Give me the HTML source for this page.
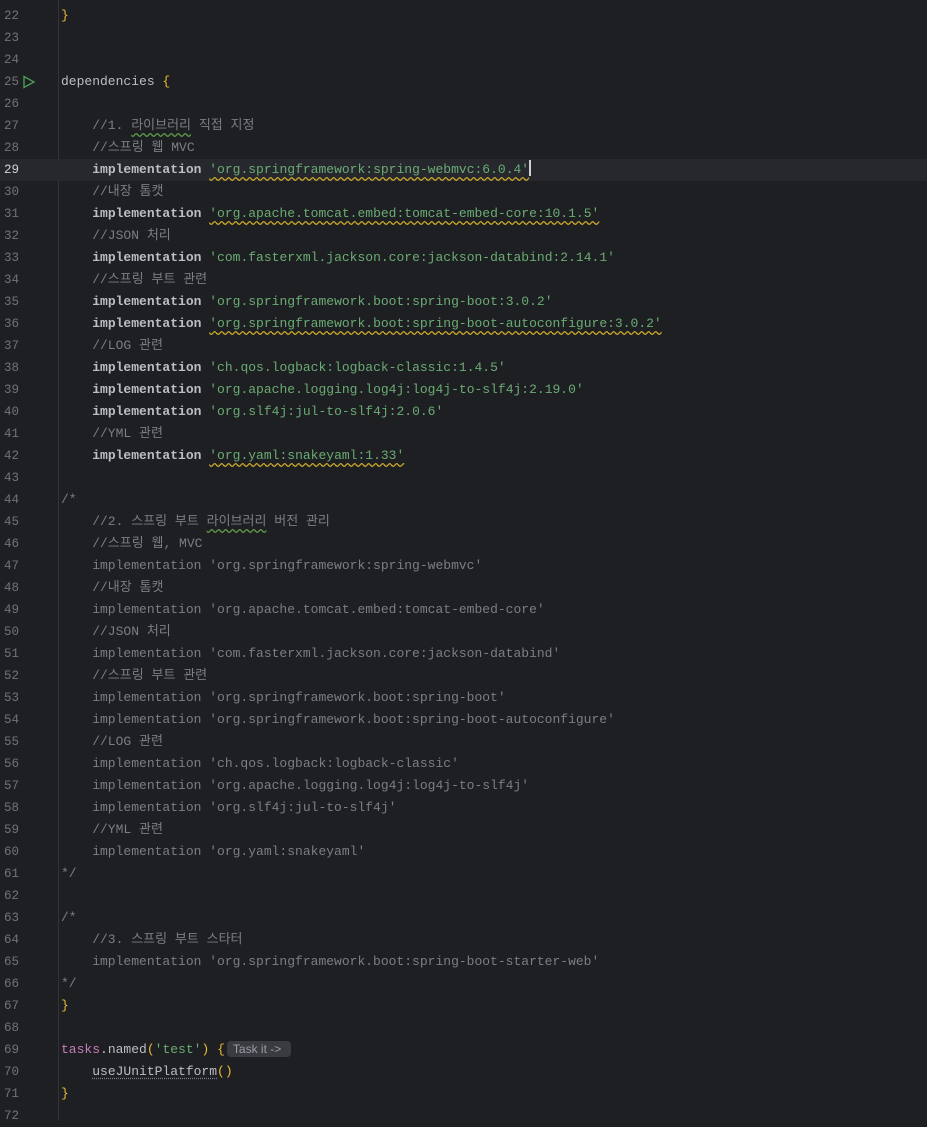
<!DOCTYPE html>
<html><head><meta charset="utf-8"><style>
body{margin:0;background:#1e1f22;width:927px;height:1121px;overflow:hidden;font-family:"Liberation Mono","Noto Sans CJK KR",monospace;font-size:13px;}
.l{position:absolute;left:0;width:927px;height:22px;line-height:22px;white-space:pre;color:#bcbec4}
.n{position:absolute;left:4px;width:30px;color:#6f737a;font-size:12.5px}
.c{position:absolute;left:61px}
.cur{background:#26282e}
.cur .n{color:#d0d2d6}
.g{position:absolute;left:58px;top:0;width:1px;height:1121px;background:#313338}
.cm{color:#7a7e85}.s{color:#6aab73}.b{color:#e8ba36}.k{font-weight:bold}.p{color:#c77dbb}
.wg{text-decoration:underline wavy #5f9a4a;text-underline-offset:3px}
.wy{text-decoration:underline wavy #c8a62a;text-underline-offset:3px}
.hint{display:inline-block;background:#393b40;color:#9a9da3;font-family:"Liberation Sans",sans-serif;font-size:12px;line-height:16px;padding:0 10px 0 6px;border-radius:4px;margin-left:2px}
.caret{display:inline-block;width:1.5px;height:16px;background:#ced0d6;vertical-align:-3px}
</style></head><body>
<div class="g"></div>
<div class="l" style="top:5px"><span class="n">22</span><span class="c b">}</span></div>
<div class="l" style="top:27px"><span class="n">23</span></div>
<div class="l" style="top:49px"><span class="n">24</span></div>
<div class="l" style="top:71px"><span class="n">25</span><svg style="position:absolute;left:22px;top:4px" width="14" height="14"><path d="M2 1.5 L12 7 L2 12.5Z" fill="none" stroke="#499c54" stroke-width="1.4"/></svg><span class="c">dependencies <span class="b">{</span></span></div>
<div class="l" style="top:93px"><span class="n">26</span></div>
<div class="l" style="top:115px"><span class="n">27</span><span class="c cm">    //1. <span class="wg">라이브러리</span> 직접 지정</span></div>
<div class="l" style="top:137px"><span class="n">28</span><span class="c cm">    //스프링 웹 MVC</span></div>
<div class="l cur" style="top:159px"><span class="n">29</span><span class="c">    <span class="k">implementation</span> <span class="s wy">'org.springframework:spring-webmvc:6.0.4'</span><span class="caret"></span></span></div>
<div class="l" style="top:181px"><span class="n">30</span><span class="c cm">    //내장 톰캣</span></div>
<div class="l" style="top:203px"><span class="n">31</span><span class="c">    <span class="k">implementation</span> <span class="s wy">'org.apache.tomcat.embed:tomcat-embed-core:10.1.5'</span></span></div>
<div class="l" style="top:225px"><span class="n">32</span><span class="c cm">    //JSON 처리</span></div>
<div class="l" style="top:247px"><span class="n">33</span><span class="c">    <span class="k">implementation</span> <span class="s">'com.fasterxml.jackson.core:jackson-databind:2.14.1'</span></span></div>
<div class="l" style="top:269px"><span class="n">34</span><span class="c cm">    //스프링 부트 관련</span></div>
<div class="l" style="top:291px"><span class="n">35</span><span class="c">    <span class="k">implementation</span> <span class="s">'org.springframework.boot:spring-boot:3.0.2'</span></span></div>
<div class="l" style="top:313px"><span class="n">36</span><span class="c">    <span class="k">implementation</span> <span class="s wy">'org.springframework.boot:spring-boot-autoconfigure:3.0.2'</span></span></div>
<div class="l" style="top:335px"><span class="n">37</span><span class="c cm">    //LOG 관련</span></div>
<div class="l" style="top:357px"><span class="n">38</span><span class="c">    <span class="k">implementation</span> <span class="s">'ch.qos.logback:logback-classic:1.4.5'</span></span></div>
<div class="l" style="top:379px"><span class="n">39</span><span class="c">    <span class="k">implementation</span> <span class="s">'org.apache.logging.log4j:log4j-to-slf4j:2.19.0'</span></span></div>
<div class="l" style="top:401px"><span class="n">40</span><span class="c">    <span class="k">implementation</span> <span class="s">'org.slf4j:jul-to-slf4j:2.0.6'</span></span></div>
<div class="l" style="top:423px"><span class="n">41</span><span class="c cm">    //YML 관련</span></div>
<div class="l" style="top:445px"><span class="n">42</span><span class="c">    <span class="k">implementation</span> <span class="s wy">'org.yaml:snakeyaml:1.33'</span></span></div>
<div class="l" style="top:467px"><span class="n">43</span></div>
<div class="l" style="top:489px"><span class="n">44</span><span class="c cm">/*</span></div>
<div class="l" style="top:511px"><span class="n">45</span><span class="c cm">    //2. 스프링 부트 <span class="wg">라이브러리</span> 버전 관리</span></div>
<div class="l" style="top:533px"><span class="n">46</span><span class="c cm">    //스프링 웹, MVC</span></div>
<div class="l" style="top:555px"><span class="n">47</span><span class="c cm">    implementation 'org.springframework:spring-webmvc'</span></div>
<div class="l" style="top:577px"><span class="n">48</span><span class="c cm">    //내장 톰캣</span></div>
<div class="l" style="top:599px"><span class="n">49</span><span class="c cm">    implementation 'org.apache.tomcat.embed:tomcat-embed-core'</span></div>
<div class="l" style="top:621px"><span class="n">50</span><span class="c cm">    //JSON 처리</span></div>
<div class="l" style="top:643px"><span class="n">51</span><span class="c cm">    implementation 'com.fasterxml.jackson.core:jackson-databind'</span></div>
<div class="l" style="top:665px"><span class="n">52</span><span class="c cm">    //스프링 부트 관련</span></div>
<div class="l" style="top:687px"><span class="n">53</span><span class="c cm">    implementation 'org.springframework.boot:spring-boot'</span></div>
<div class="l" style="top:709px"><span class="n">54</span><span class="c cm">    implementation 'org.springframework.boot:spring-boot-autoconfigure'</span></div>
<div class="l" style="top:731px"><span class="n">55</span><span class="c cm">    //LOG 관련</span></div>
<div class="l" style="top:753px"><span class="n">56</span><span class="c cm">    implementation 'ch.qos.logback:logback-classic'</span></div>
<div class="l" style="top:775px"><span class="n">57</span><span class="c cm">    implementation 'org.apache.logging.log4j:log4j-to-slf4j'</span></div>
<div class="l" style="top:797px"><span class="n">58</span><span class="c cm">    implementation 'org.slf4j:jul-to-slf4j'</span></div>
<div class="l" style="top:819px"><span class="n">59</span><span class="c cm">    //YML 관련</span></div>
<div class="l" style="top:841px"><span class="n">60</span><span class="c cm">    implementation 'org.yaml:snakeyaml'</span></div>
<div class="l" style="top:863px"><span class="n">61</span><span class="c cm">*/</span></div>
<div class="l" style="top:885px"><span class="n">62</span></div>
<div class="l" style="top:907px"><span class="n">63</span><span class="c cm">/*</span></div>
<div class="l" style="top:929px"><span class="n">64</span><span class="c cm">    //3. 스프링 부트 스타터</span></div>
<div class="l" style="top:951px"><span class="n">65</span><span class="c cm">    implementation 'org.springframework.boot:spring-boot-starter-web'</span></div>
<div class="l" style="top:973px"><span class="n">66</span><span class="c cm">*/</span></div>
<div class="l" style="top:995px"><span class="n">67</span><span class="c b">}</span></div>
<div class="l" style="top:1017px"><span class="n">68</span></div>
<div class="l" style="top:1039px"><span class="n">69</span><span class="c"><span class="p">tasks</span>.named<span class="b">(</span><span class="s">'test'</span><span class="b">)</span> <span class="b">{</span><span class="hint">Task it -&gt;</span></span></div>
<div class="l" style="top:1061px"><span class="n">70</span><span class="c">    <span style="text-decoration:underline dotted #7a7e85;text-underline-offset:3px">useJUnitPlatform</span><span class="b">()</span></span></div>
<div class="l" style="top:1083px"><span class="n">71</span><span class="c b">}</span></div>
<div class="l" style="top:1105px"><span class="n">72</span></div>
</body></html>
